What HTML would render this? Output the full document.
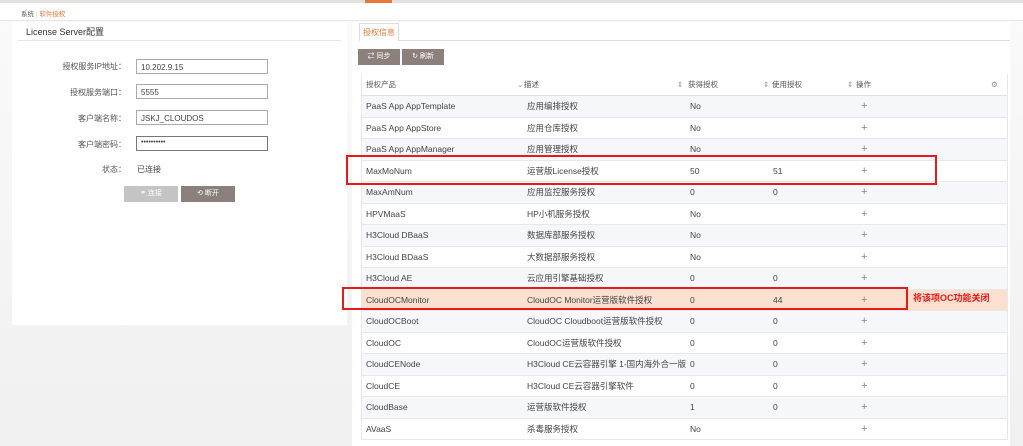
<!DOCTYPE html>
<html><head><meta charset="utf-8"><style>
*{margin:0;padding:0;box-sizing:border-box}
body{width:1023px;height:446px;overflow:hidden;position:relative;background:linear-gradient(#fafafa,#f0f0f0);font-family:"Liberation Sans","Noto Sans CJK SC",sans-serif;font-size:8px;color:#444}
.a{position:absolute}
.topbar{left:0;top:0;width:1023px;height:3px;background:#e4e0de}
.topbar i{position:absolute;left:365px;top:0;width:27px;height:3px;background:#e8773a}
.crumb{left:0;top:3px;width:1023px;height:18px;background:#fff;border-bottom:1px solid #e6e6e6}
.lp{left:12px;top:22px;width:335px;height:303px;background:#fff}
.rp{left:352px;top:22px;width:658px;height:424px;background:#fff}
.lbl{width:114px;text-align:right;font-size:8px;color:#555}
.inp{left:136px;width:132px;height:15px;border:1px solid #aaa;background:#fff;font-size:8px;padding:3px 4px;color:#444}
.btn{height:16px;color:#fff;font-size:7px;text-align:center;line-height:16px}
.row{left:361px;width:647px;height:21.5px;border-bottom:1px solid #e8e8e8}
.row span{position:absolute;top:0;line-height:21px;font-size:8.5px;color:#444;white-space:nowrap}
.row span.p{color:#888;font-size:11px;left:500px}
.hd span{color:#555;font-size:7.5px}
.red{border:2px solid #e8191b}
</style></head><body>
<div class="a topbar"><i></i></div>
<div class="a crumb"><span class="a" style="left:21px;top:5px;font-size:6.5px;color:#555">系统 <span style="color:#ccc">|</span> <span style="color:#e8773a">软件授权</span></span></div>

<div class="a lp"></div>
<div class="a" style="left:26px;top:25px;font-size:9px;color:#333">License Server配置</div>
<div class="a" style="left:18px;top:40px;width:323px;height:1px;background:#e6e6e6"></div>
<div class="a lbl" style="left:12px;top:61px">授权服务IP地址：</div>
<div class="a inp" style="top:59px">10.202.9.15</div>
<div class="a lbl" style="left:12px;top:87px">授权服务端口：</div>
<div class="a inp" style="top:84px">5555</div>
<div class="a lbl" style="left:12px;top:113px">客户端名称：</div>
<div class="a inp" style="top:110px">JSKJ_CLOUDOS</div>
<div class="a lbl" style="left:12px;top:139px">客户端密码：</div>
<div class="a inp" style="top:136px;border-color:#777;font-size:7px;padding-top:2px">••••••••••</div>
<div class="a lbl" style="left:12px;top:164px">状态：</div>
<div class="a" style="left:137px;top:164px">已连接</div>
<div class="a btn" style="left:124px;top:186px;width:54px;background:#c4c4c4">⚭ 连接</div>
<div class="a btn" style="left:181px;top:186px;width:54px;background:#8b807b">⟲ 断开</div>

<div class="a rp"></div>
<div class="a" style="left:359px;top:23px;width:40px;height:18px;border:1px solid #ddd;border-bottom:none;background:#fff;color:#e8773a;font-size:8px;text-align:center;line-height:17px">授权信息</div>
<div class="a" style="left:398px;top:40px;width:612px;height:1px;background:#ddd"></div>
<div class="a btn" style="left:358px;top:49px;width:42px;background:#8b807b">⇄ 同步</div>
<div class="a btn" style="left:402px;top:49px;width:42px;background:#8b807b">↻ 刷新</div>

<div class="a row hd" style="top:74px;height:22px;border-bottom:1px solid #e0e0e0">
<span style="left:5px">授权产品</span><span style="left:156px;color:#999">⌄</span>
<span style="left:163px">描述</span><span style="left:316px;color:#999">⇕</span>
<span style="left:327px">获得授权</span><span style="left:402px;color:#999">⇕</span>
<span style="left:411px">使用授权</span><span style="left:486px;color:#999">⇕</span>
<span style="left:495px">操作</span><span style="left:630px;color:#888">⚙</span>
</div>

<div class="a row" style="top:96px;background:#f5f7fa"><span style="left:5px">PaaS App AppTemplate</span><span style="left:166px">应用编排授权</span><span style="left:329px">No</span><span class="p">+</span></div>
<div class="a row" style="top:117.5px"><span style="left:5px">PaaS App AppStore</span><span style="left:166px">应用仓库授权</span><span style="left:329px">No</span><span class="p">+</span></div>
<div class="a row" style="top:139px;background:#f5f7fa"><span style="left:5px">PaaS App AppManager</span><span style="left:166px">应用管理授权</span><span style="left:329px">No</span><span class="p">+</span></div>
<div class="a row" style="top:160.5px"><span style="left:5px">MaxMoNum</span><span style="left:166px">运营版License授权</span><span style="left:329px">50</span><span style="left:412px">51</span><span class="p">+</span></div>
<div class="a row" style="top:182px;background:#f5f7fa"><span style="left:5px">MaxAmNum</span><span style="left:166px">应用监控服务授权</span><span style="left:329px">0</span><span style="left:412px">0</span><span class="p">+</span></div>
<div class="a row" style="top:203.5px"><span style="left:5px">HPVMaaS</span><span style="left:166px">HP小机服务授权</span><span style="left:329px">No</span><span class="p">+</span></div>
<div class="a row" style="top:225px;background:#f5f7fa"><span style="left:5px">H3Cloud DBaaS</span><span style="left:166px">数据库部服务授权</span><span style="left:329px">No</span><span class="p">+</span></div>
<div class="a row" style="top:246.5px"><span style="left:5px">H3Cloud BDaaS</span><span style="left:166px">大数据部服务授权</span><span style="left:329px">No</span><span class="p">+</span></div>
<div class="a row" style="top:268px;background:#f5f7fa"><span style="left:5px">H3Cloud AE</span><span style="left:166px">云应用引擎基础授权</span><span style="left:329px">0</span><span style="left:412px">0</span><span class="p">+</span></div>
<div class="a row" style="top:289.5px;background:#fbe0cf"><span style="left:5px">CloudOCMonitor</span><span style="left:166px">CloudOC Monitor运营版软件授权</span><span style="left:329px">0</span><span style="left:412px">44</span><span class="p">+</span></div>
<div class="a row" style="top:311px;background:#f5f7fa"><span style="left:5px">CloudOCBoot</span><span style="left:166px">CloudOC Cloudboot运营版软件授权</span><span style="left:329px">0</span><span style="left:412px">0</span><span class="p">+</span></div>
<div class="a row" style="top:332.5px"><span style="left:5px">CloudOC</span><span style="left:166px">CloudOC运营版软件授权</span><span style="left:329px">0</span><span style="left:412px">0</span><span class="p">+</span></div>
<div class="a row" style="top:354px;background:#f5f7fa"><span style="left:5px">CloudCENode</span><span style="left:166px">H3Cloud CE云容器引擎 1-国内海外合一版</span><span style="left:329px">0</span><span style="left:412px">0</span><span class="p">+</span></div>
<div class="a row" style="top:375.5px"><span style="left:5px">CloudCE</span><span style="left:166px">H3Cloud CE云容器引擎软件</span><span style="left:329px">0</span><span style="left:412px">0</span><span class="p">+</span></div>
<div class="a row" style="top:397px;background:#f5f7fa"><span style="left:5px">CloudBase</span><span style="left:166px">运营版软件授权</span><span style="left:329px">1</span><span style="left:412px">0</span><span class="p">+</span></div>
<div class="a row" style="top:418.5px"><span style="left:5px">AVaaS</span><span style="left:166px">杀毒服务授权</span><span style="left:329px">No</span><span class="p">+</span></div>
<div class="a" style="left:361px;top:74px;width:1px;height:366px;background:#e8e8e8"></div>
<div class="a" style="left:1007px;top:74px;width:1px;height:366px;background:#e8e8e8"></div>

<div class="a red" style="left:346px;top:155px;width:591px;height:30px"></div>
<div class="a red" style="left:342px;top:287px;width:566px;height:23px"></div>
<div class="a" style="left:913px;top:291px;color:#e8191b;font-size:9px;font-weight:bold">将该项OC功能关闭</div>
</body></html>
